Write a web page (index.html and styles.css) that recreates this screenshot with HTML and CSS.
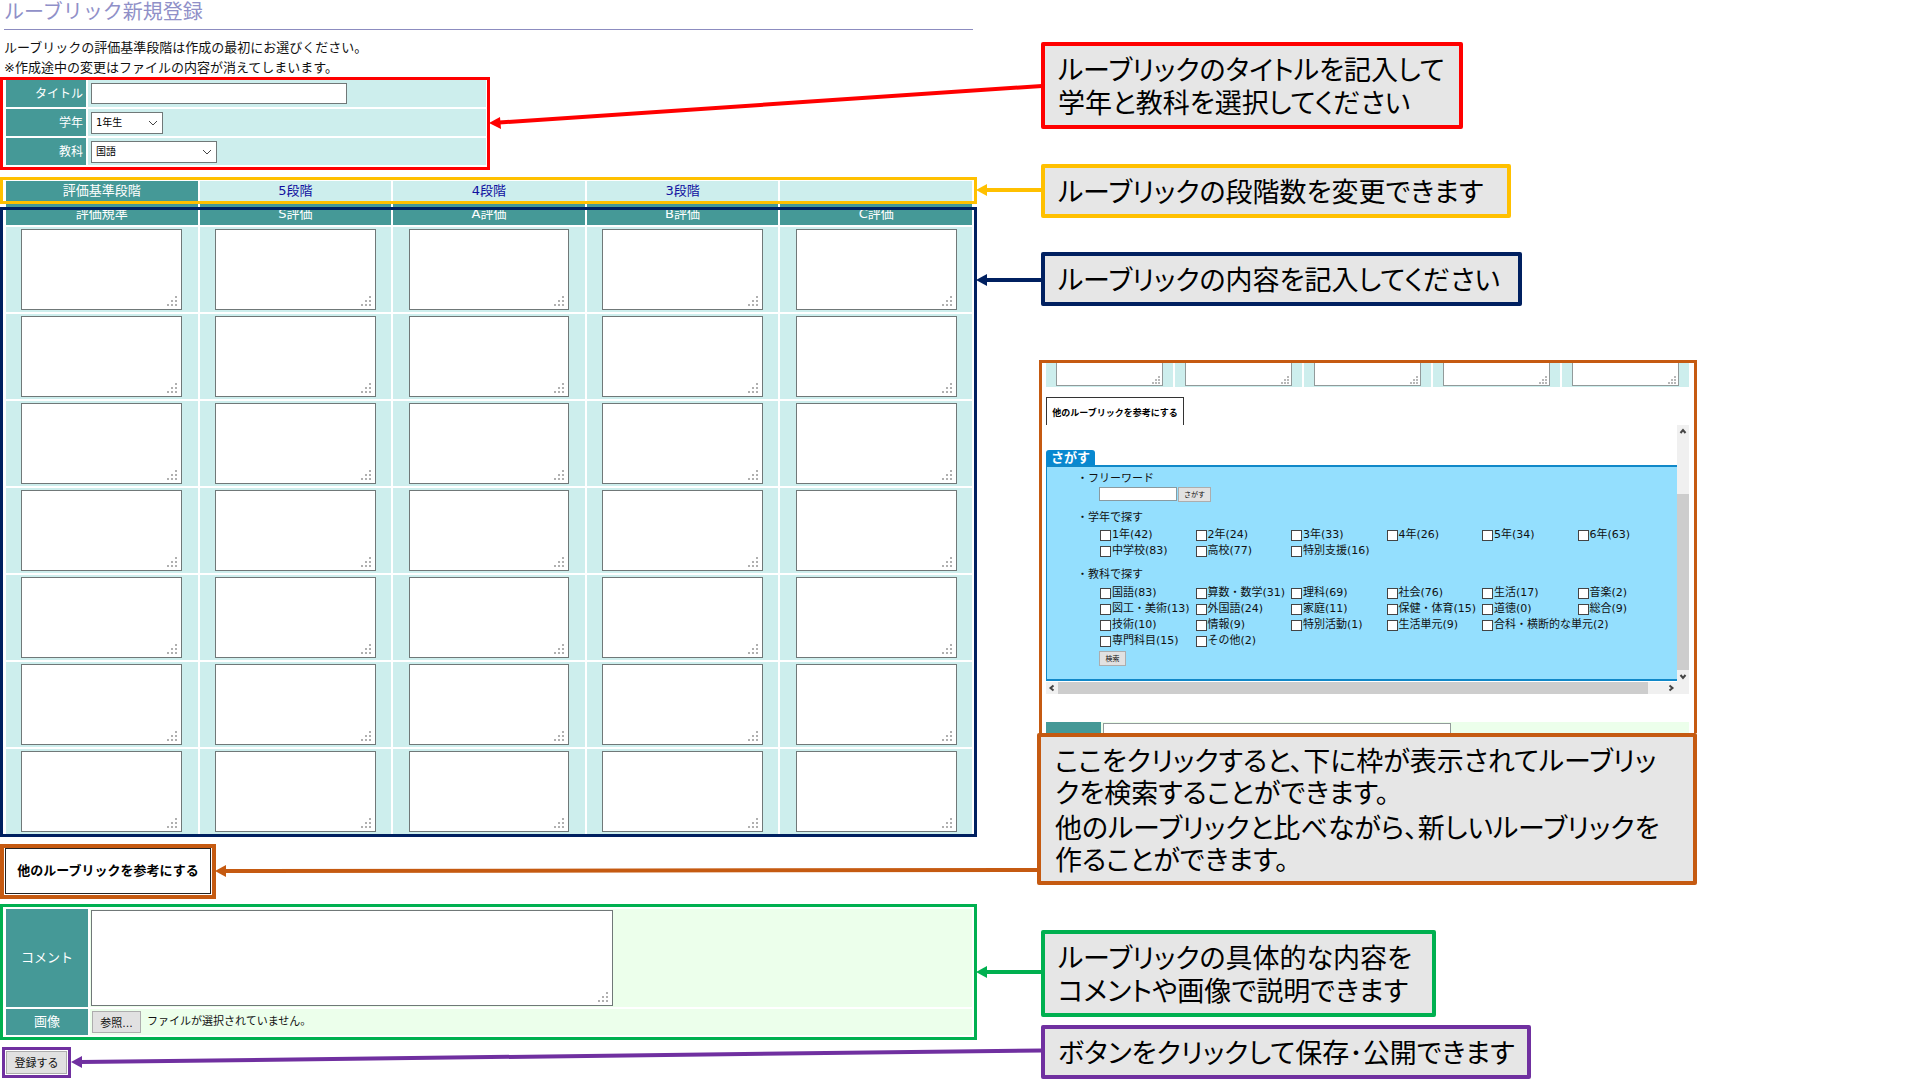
FILE: index.html
```html
<!DOCTYPE html>
<html lang="ja">
<head>
<meta charset="utf-8">
<title>ルーブリック新規登録</title>
<link rel="stylesheet" href="styles.css">
</head>
<body>
<div class="page">
  <main class="editor">
    <h1 class="title">ルーブリック新規登録</h1>
    <p class="intro">ルーブリックの評価基準段階は作成の最初にお選びください。<br>※作成途中の変更はファイルの内容が消えてしまいます。</p>

    <section class="frame frame-basic">
      <table class="sheet basic">
        <tr><th><label for="name">タイトル</label></th><td><input id="name" class="box name" type="text"></td></tr>
        <tr><th><label for="grade">学年</label></th><td><select id="grade" class="box pick pick-grade"><option>1年生</option></select></td></tr>
        <tr><th><label for="subject">教科</label></th><td><select id="subject" class="box pick pick-subject"><option>国語</option></select></td></tr>
      </table>
    </section>

    <section class="frame frame-steps">
      <table class="sheet steps">
        <tr><th>評価基準段階</th><td><a href="#s5">5段階</a></td><td><a href="#s4">4段階</a></td><td><a href="#s3">3段階</a></td><td></td></tr>
      </table>
    </section>

    <section class="frame frame-grid">
      <table class="sheet rubric">
        <thead><tr><th>評価規準</th><th>S評価</th><th>A評価</th><th>B評価</th><th>C評価</th></tr></thead>
        <tbody>
          <tr><td><textarea class="box" aria-label="規準1"></textarea></td><td><textarea class="box" aria-label="S1"></textarea></td><td><textarea class="box" aria-label="A1"></textarea></td><td><textarea class="box" aria-label="B1"></textarea></td><td><textarea class="box" aria-label="C1"></textarea></td></tr>
          <tr><td><textarea class="box" aria-label="規準2"></textarea></td><td><textarea class="box" aria-label="S2"></textarea></td><td><textarea class="box" aria-label="A2"></textarea></td><td><textarea class="box" aria-label="B2"></textarea></td><td><textarea class="box" aria-label="C2"></textarea></td></tr>
          <tr><td><textarea class="box" aria-label="規準3"></textarea></td><td><textarea class="box" aria-label="S3"></textarea></td><td><textarea class="box" aria-label="A3"></textarea></td><td><textarea class="box" aria-label="B3"></textarea></td><td><textarea class="box" aria-label="C3"></textarea></td></tr>
          <tr><td><textarea class="box" aria-label="規準4"></textarea></td><td><textarea class="box" aria-label="S4"></textarea></td><td><textarea class="box" aria-label="A4"></textarea></td><td><textarea class="box" aria-label="B4"></textarea></td><td><textarea class="box" aria-label="C4"></textarea></td></tr>
          <tr><td><textarea class="box" aria-label="規準5"></textarea></td><td><textarea class="box" aria-label="S5"></textarea></td><td><textarea class="box" aria-label="A5"></textarea></td><td><textarea class="box" aria-label="B5"></textarea></td><td><textarea class="box" aria-label="C5"></textarea></td></tr>
          <tr><td><textarea class="box" aria-label="規準6"></textarea></td><td><textarea class="box" aria-label="S6"></textarea></td><td><textarea class="box" aria-label="A6"></textarea></td><td><textarea class="box" aria-label="B6"></textarea></td><td><textarea class="box" aria-label="C6"></textarea></td></tr>
          <tr><td><textarea class="box" aria-label="規準7"></textarea></td><td><textarea class="box" aria-label="S7"></textarea></td><td><textarea class="box" aria-label="A7"></textarea></td><td><textarea class="box" aria-label="B7"></textarea></td><td><textarea class="box" aria-label="C7"></textarea></td></tr>
        </tbody>
      </table>
    </section>

    <div class="refer"><button class="refer-button" type="button">他のルーブリックを参考にする</button></div>

    <section class="frame frame-notes">
      <table class="sheet notes">
        <tr><th><label for="comment">コメント</label></th><td><textarea id="comment" class="box"></textarea></td></tr>
        <tr><th>画像</th><td><div class="file"><button class="gray file-button" type="button">参照...</button><span>ファイルが選択されていません。</span></div></td></tr>
      </table>
    </section>

    <div class="submit"><button class="gray submit-button" type="submit">登録する</button></div>
  </main>

  <aside class="guide">
    <p class="note note-red">ルーブリックのタイトルを記入して<br>学年と教科を選択してください</p>
    <p class="note note-yellow">ルーブリックの段階数を変更できます</p>
    <p class="note note-navy">ルーブリックの内容を記入してください</p>

    <div class="search-guide">
      <div class="preview">
        <div class="strip">
          <div><span></span></div><div><span></span></div><div><span></span></div><div><span></span></div><div><span></span></div>
        </div>
        <button class="preview-button" type="button">他のルーブリックを参考にする</button>
        <div class="scroller">
          <form class="search">
            <h2 class="tab">さがす</h2>
            <div class="panel">
              <h3><label for="word">・フリーワード</label></h3>
              <div class="word"><input id="word" type="text"><button class="gray mini mini-wide" type="button">さがす</button></div>
              <h3>・学年で探す</h3>
              <div class="choices">
                <label><input type="checkbox">1年(42)</label><label><input type="checkbox">2年(24)</label><label><input type="checkbox">3年(33)</label><label><input type="checkbox">4年(26)</label><label><input type="checkbox">5年(34)</label><label><input type="checkbox">6年(63)</label>
                <label><input type="checkbox">中学校(83)</label><label><input type="checkbox">高校(77)</label><label><input type="checkbox">特別支援(16)</label>
              </div>
              <h3>・教科で探す</h3>
              <div class="choices choices-subject">
                <label><input type="checkbox">国語(83)</label><label><input type="checkbox">算数・数学(31)</label><label><input type="checkbox">理科(69)</label><label><input type="checkbox">社会(76)</label><label><input type="checkbox">生活(17)</label><label><input type="checkbox">音楽(2)</label>
                <label><input type="checkbox">図工・美術(13)</label><label><input type="checkbox">外国語(24)</label><label><input type="checkbox">家庭(11)</label><label><input type="checkbox">保健・体育(15)</label><label><input type="checkbox">道徳(0)</label><label><input type="checkbox">総合(9)</label>
                <label><input type="checkbox">技術(10)</label><label><input type="checkbox">情報(9)</label><label><input type="checkbox">特別活動(1)</label><label><input type="checkbox">生活単元(9)</label><label class="wide"><input type="checkbox">合科・横断的な単元(2)</label>
                <label><input type="checkbox">専門科目(15)</label><label><input type="checkbox">その他(2)</label>
              </div>
              <button class="gray mini" type="button">検索</button>
            </div>
          </form>
          <div class="bar bar-v">
            <svg width="12" height="12" viewBox="0 0 12 12"><path d="M3.500 8 6 5 8.500 8"/></svg>
            <span class="thumb"></span>
            <svg width="12" height="12" viewBox="0 0 12 12"><path d="M3.500 5 6 8 8.500 5"/></svg>
          </div>
          <div class="bar bar-h">
            <svg width="12" height="12" viewBox="0 0 12 12"><path d="M7.500 3.500 4.500 6 7.500 8.500"/></svg>
            <span class="thumb"></span>
            <svg width="12" height="12" viewBox="0 0 12 12"><path d="M4.500 3.500 7.500 6 4.500 8.500"/></svg>
          </div>
        </div>
        <div class="foot"><span class="foot-head"></span><span class="foot-box"></span></div>
      </div>
      <div class="note note-orange">
        <p>ここをクリックすると、下に枠が表示されてルーブリッ<br>クを検索することができます。</p>
        <p>他のルーブリックと比べながら、新しいルーブリックを<br>作ることができます。</p>
      </div>
    </div>

    <p class="note note-green">ルーブリックの具体的な内容を<br>コメントや画像で説明できます</p>
    <p class="note note-purple">ボタンをクリックして保存･公開できます</p>
  </aside>

  <svg class="arrows" viewBox="0 0 1920 1080" preserveAspectRatio="none" aria-hidden="true">
    <g stroke="#ff0000" fill="#ff0000"><path d="M1042 86 499 122.500" /><path class="tip" d="M489 123 500 117 501 129z"/></g>
    <g stroke="#ffc000" fill="#ffc000"><path d="M1042 190H986"/><path class="tip" d="M976 190 987 184V196z"/></g>
    <g stroke="#002060" fill="#002060"><path d="M1042 280H986"/><path class="tip" d="M976 280 987 274V286z"/></g>
    <g stroke="#c55a11" fill="#c55a11"><path d="M1038 870 225 871"/><path class="tip" d="M215 871 226 865V877z"/></g>
    <g stroke="#00b050" fill="#00b050"><path d="M1042 972H986"/><path class="tip" d="M976 972 987 966V978z"/></g>
    <g stroke="#7030a0" fill="#7030a0"><path d="M1042 1050.500 81 1062"/><path class="tip" d="M71 1062 82 1056V1068z"/></g>
  </svg>
</div>
</body>
</html>
```
FILE: styles.css
```css
* { box-sizing: border-box; }

body {
  margin: 0;
  background: #fff;
  color: #111;
  font: 13px/20px "DejaVu Sans", "Noto Sans CJK JP", sans-serif;
}

h1, h2, h3, p { margin: 0; font-weight: 400; }
button, input, select, textarea { font-family: inherit; }

.page {
  position: relative;
  display: grid;
  grid-template-columns: 977fr 943fr;
}

.arrows {
  position: absolute;
  top: 0;
  left: 0;
  width: 100%;
  height: 1080px;
  fill: none;
  stroke-width: 4;
  pointer-events: none;
}
.arrows .tip { stroke: none; }

/* rubric editor */
.title {
  margin: 0 4px;
  padding-bottom: 5px;
  border-bottom: 1px solid #8c8cc0;
  color: #9090c8;
  font-size: 20px;
  line-height: 24px;
}
.intro { margin: 8px 4px 0; }

.frame { position: relative; padding: 0 3px 0 4px; }
.frame::after {
  content: "";
  position: absolute;
  inset: 0;
  border: 3px solid;
  pointer-events: none;
}
.frame-basic { width: 490px; padding-right: 2px; color: #ff0000; }
.frame-basic::after { inset: -1px 0 -3px; }
.frame-steps { margin-top: 12px; color: #ffc000; z-index: 1; }
.frame-steps::after { inset: -2px 0 -1px; }
.frame-grid { margin-top: -2px; color: #002060; }
.frame-grid::after { inset: 6px 0 -1px; }
.frame-notes { margin-top: 5px; padding-top: 3px; padding-bottom: 3px; color: #00b050; }

.sheet {
  width: 100%;
  table-layout: fixed;
  border-collapse: separate;
  border-spacing: 2px;
  color: #111;
}
.sheet th {
  padding: 0;
  background: #459997;
  color: #fff;
  font-weight: 400;
}
.sheet td { padding: 0; background: #cdeeed; text-align: center; }

.box {
  display: block;
  margin: 0;
  border: 1px solid #707878;
  border-radius: 0;
  background-color: #fff;
  outline: 0;
}
textarea.box {
  resize: none;
  background-image: url("data:image/svg+xml,%3Csvg xmlns='http://www.w3.org/2000/svg' width='10' height='10' fill='%23b0b0b0'%3E%3Cpath d='M8 0h2v2H8zM4 4h2v2H4zM8 4h2v2H8zM0 8h2v2H0zM4 8h2v2H4zM8 8h2v2H8z'/%3E%3C/svg%3E");
  background-repeat: no-repeat;
  background-position: right 4px bottom 3px;
}

.basic th { width: 80px; height: 27px; padding-right: 3px; text-align: right; font-size: 12px; }
.basic td { padding-left: 3px; }
.name { width: 256px; height: 21px; }
.pick {
  height: 22px;
  padding: 0 4px;
  appearance: none;
  font-size: 10px;
  background-image: url("data:image/svg+xml,%3Csvg xmlns='http://www.w3.org/2000/svg' width='10' height='6' fill='none' stroke='%23444'%3E%3Cpath d='M1 1l4 4 4-4'/%3E%3C/svg%3E");
  background-repeat: no-repeat;
  background-position: right 4px center;
}
.pick-grade { width: 72px; }
.pick-subject { width: 126px; }

.steps th, .steps td { height: 20px; }
.steps a { color: #1010a0; text-decoration: none; }
.rubric th { height: 22px; }
.rubric td { padding: 2px 0; }
.rubric textarea { width: 84%; height: 81px; margin: 0 auto; }

.refer {
  width: fit-content;
  margin-top: 8px;
  padding: 0 1px 1px;
  border: 4px solid #c55a11;
}
.refer-button {
  display: block;
  width: 206px;
  height: 46px;
  padding: 0 0 3px;
  border: 1px solid #222;
  background: #fff;
  color: #000;
  font-size: 13px;
  font-weight: 700;
}

.notes th { width: 82px; }
.notes td { padding: 1px; background: #ecffeb; text-align: left; }
.notes textarea { width: 522px; height: 96px; }
.file { display: flex; align-items: center; gap: 6px; height: 24px; font-size: 11px; }

.gray {
  padding: 0;
  border: 1px solid #adadad;
  border-radius: 0;
  background: #e1e1e1;
  color: #111;
  white-space: nowrap;
}
.file-button { width: 49px; height: 22px; margin-left: 1px; font-size: 11px; }
.submit {
  width: fit-content;
  margin: 7px 0 0 2px;
  padding: 1px;
  border: 3px solid #7030a0;
}
.submit-button { display: block; width: 61px; height: 23px; padding-bottom: 2px; font-size: 11px; }

/* callouts */
.guide { padding: 42px 0 0 60px; }
.note {
  width: fit-content;
  margin-left: 4px;
  padding: 6px 12px 7px 13px;
  border: 4px solid;
  border-radius: 2px;
  background: #e6e6e6;
  color: #000;
  font: 27px/33px "Noto Sans CJK JP", sans-serif;
  font-feature-settings: "palt";
  white-space: nowrap;
}
.note-red { min-width: 422px; border-color: #ff0000; }
.note-yellow { min-width: 470px; margin-top: 35px; border-color: #ffc000; }
.note-navy { min-width: 481px; margin-top: 34px; border-color: #002060; }
.note-green { min-width: 395px; margin-top: 45px; border-color: #00b050; }
.note-purple { min-width: 490px; margin-top: 8px; border-color: #7030a0; }
.note-orange {
  display: grid;
  gap: 3px;
  width: auto;
  margin-left: 0;
  padding: 7px 12px 6px 14px;
  border-color: #c55a11;
  line-height: 32px;
}

/* search preview */
.search-guide { width: 660px; margin-top: 54px; }
.preview {
  display: flex;
  flex-direction: column;
  height: 373px;
  margin-left: 2px;
  padding: 0 5px 0 4px;
  border: 3px solid #c55a11;
  border-bottom: 0;
}
.strip { display: grid; grid-template-columns: repeat(5, 1fr); gap: 2px; height: 24px; }
.strip div { padding: 0 10px 1px; background: #cdeeed; }
.strip span {
  display: block;
  height: 100%;
  border: solid #929a9a;
  border-width: 0 1px 1px;
  background: #fff url("data:image/svg+xml,%3Csvg xmlns='http://www.w3.org/2000/svg' width='8' height='8' fill='%23b8b8b8'%3E%3Cpath d='M6 0h2v2H6zM3 3h2v2H3zM6 3h2v2H6zM0 6h2v2H0zM3 6h2v2H3zM6 6h2v2H6z'/%3E%3C/svg%3E") no-repeat right 2px bottom 1px;
}
.preview-button {
  width: 138px;
  height: 28px;
  margin-top: 10px;
  padding: 2px 0 0;
  border: solid #333;
  border-width: 1px 1px 0;
  background: #fff;
  color: #000;
  font-size: 9px;
  font-weight: 700;
}
.scroller {
  display: grid;
  grid-template-columns: 1fr 12px;
  grid-template-rows: 257px 12px;
}
.search { padding-top: 25px; }
.tab {
  width: 49px;
  border-radius: 3px 3px 0 0;
  background: #0888d0;
  color: #fff;
  font-size: 13px;
  font-weight: 700;
  line-height: 15px;
  text-align: center;
}
.panel {
  height: 216px;
  padding: 4px 0 0 27px;
  border: solid #1088c8;
  border-width: 2px 0 2px 1px;
  background: #94dffe;
  font-size: 11px;
}
.panel h3 { padding-left: 3px; font-size: 11px; line-height: 16px; }
.word { display: flex; gap: 1px; height: 23px; padding-left: 25px; }
.word input { width: 78px; height: 14px; padding: 0; border: 1px solid #8a9aa0; background: #fff; }
.mini { width: 27px; height: 15px; font-size: 7px; line-height: 12px; }
.mini-wide { width: 33px; }
.panel > .mini { display: block; margin: 2px 0 0 25px; }
.choices {
  display: grid;
  grid-template-columns: repeat(6, 1fr);
  width: 599px;
  margin-bottom: 8px;
  padding: 1px 0 0 26px;
  line-height: 16px;
  white-space: nowrap;
}
.choices-subject { margin-bottom: 0; padding-top: 2px; }
.choices label { display: flex; align-items: center; gap: 1px; min-width: 0; }
.choices .wide { grid-column: span 2; }
.choices input {
  flex: none;
  width: 11px;
  height: 11px;
  margin: 0;
  appearance: none;
  border: 1px solid #444;
  background: #fff;
}
.bar { display: flex; background: #f0f0f0; }
.bar svg { flex: none; fill: none; stroke: #444; stroke-width: 2; }
.bar .thumb { background: #cdcdcd; }
.bar-v { flex-direction: column; }
.bar-v .thumb { flex: 1; margin-top: 57px; }
.bar-h { grid-column: 1 / -1; padding-right: 12px; }
.bar-h .thumb { flex: 1; margin-right: 17px; }
.foot { display: flex; gap: 2px; height: 11px; margin-top: auto; background: #ecffeb; }
.foot-head { width: 55px; background: #459997; }
.foot-box { width: 348px; margin-top: 1px; border: solid #929a9a; border-width: 1px 1px 0; background: #fff; }
```
